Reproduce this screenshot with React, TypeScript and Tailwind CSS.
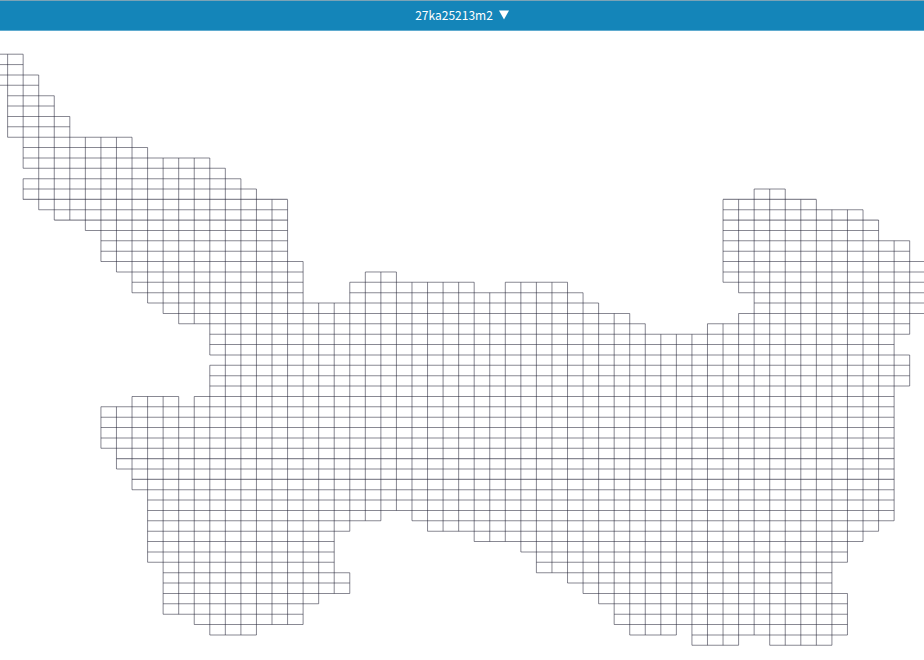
type Span = [start: number, end: number];

const CELL_W = 15.553;
const CELL_H = 10.37;
const ORIGIN_X = 7.6;
const ORIGIN_Y = 23.2;

// Occupied column spans per grid row, end exclusive.
const ROWS: Span[][] = [
  [[-1, 1]],
  [[-1, 1]],
  [[-1, 2]],
  [[0, 2]],
  [[0, 3]],
  [[0, 3]],
  [[0, 4]],
  [[0, 4]],
  [[1, 8]],
  [[1, 9]],
  [[1, 13]],
  [[2, 14]],
  [[1, 15]],
  [[1, 16], [48, 50]],
  [[2, 18], [46, 52]],
  [[3, 18], [46, 55]],
  [[5, 18], [46, 56]],
  [[6, 18], [46, 56]],
  [[6, 18], [46, 58]],
  [[6, 18], [46, 58]],
  [[7, 19], [46, 60]],
  [[8, 19], [23, 25], [46, 60]],
  [[8, 19], [22, 30], [32, 36], [47, 60]],
  [[9, 19], [22, 37], [48, 60]],
  [[10, 38], [48, 60]],
  [[11, 40], [47, 58]],
  [[13, 41], [45, 58]],
  [[13, 57]],
  [[13, 57]],
  [[14, 58]],
  [[13, 58]],
  [[13, 58]],
  [[13, 57]],
  [[8, 11], [12, 57]],
  [[6, 57]],
  [[6, 57]],
  [[6, 57]],
  [[6, 57]],
  [[7, 57]],
  [[7, 57]],
  [[8, 57]],
  [[8, 57]],
  [[9, 57]],
  [[9, 57]],
  [[9, 24], [26, 57]],
  [[9, 22], [27, 56]],
  [[9, 21], [30, 55]],
  [[9, 21], [33, 54]],
  [[9, 21], [34, 54]],
  [[10, 21], [34, 53]],
  [[10, 22], [36, 53]],
  [[10, 22], [37, 53]],
  [[10, 20], [38, 54]],
  [[10, 19], [39, 54]],
  [[12, 19], [39, 54]],
  [[13, 16], [40, 43], [44, 54]],
  [[44, 47], [49, 53]],
];

function filled(row: number, col: number): boolean {
  return (ROWS[row] ?? []).some(([start, end]) => col >= start && col < end);
}

// Joins neighbouring edges into runs, so shared borders are stroked once.
function runs(from: number, to: number, hasEdge: (i: number) => boolean): Span[] {
  const out: Span[] = [];
  let start: number | null = null;
  for (let i = from; i <= to; i++) {
    if (hasEdge(i) && start === null) start = i;
    if (!hasEdge(i) && start !== null) {
      out.push([start, i]);
      start = null;
    }
  }
  return out;
}

const px = (col: number) => (ORIGIN_X + col * CELL_W).toFixed(2);
const py = (row: number) => (ORIGIN_Y + row * CELL_H).toFixed(2);

function gridLines(): string[] {
  const lines: string[] = [];
  for (let row = 0; row <= ROWS.length; row++) {
    for (const [a, b] of runs(-1, 61, (c) => filled(row, c) || filled(row - 1, c))) {
      lines.push(`M${px(a)} ${py(row)}H${px(b)}`);
    }
  }
  for (let col = -1; col <= 60; col++) {
    for (const [a, b] of runs(0, ROWS.length, (r) => filled(r, col) || filled(r, col - 1))) {
      lines.push(`M${px(col)} ${py(a)}V${py(b)}`);
    }
  }
  return lines;
}

const LINES = gridLines();

function Header() {
  return (
    <header className="flex h-[31px] items-center justify-center border-y border-t-[#7ba3b6] border-b-[#5fabcf] bg-[#1485b9] pb-0.5">
      <button
        type="button"
        className="flex items-center gap-1.5 font-['Noto_Sans_CJK_SC',sans-serif] text-xs leading-4 text-white"
      >
        <span>27ka25213m2</span>
        <svg className="h-2.5 w-2.5" viewBox="0 0 10 10" fill="currentColor" aria-hidden="true">
          <path d="M0 0.5H10L5 9.5Z" />
        </svg>
      </button>
    </header>
  );
}

export default function App() {
  return (
    <div className="min-h-screen overflow-hidden bg-white">
      <Header />
      <main>
        <svg className="block w-full" viewBox="0 0 924 629" fill="none">
          <g stroke="#1c1c30" strokeOpacity="0.52" strokeWidth="1.02">
            {LINES.map((d) => (
              <path key={d} d={d} />
            ))}
          </g>
        </svg>
      </main>
    </div>
  );
}
